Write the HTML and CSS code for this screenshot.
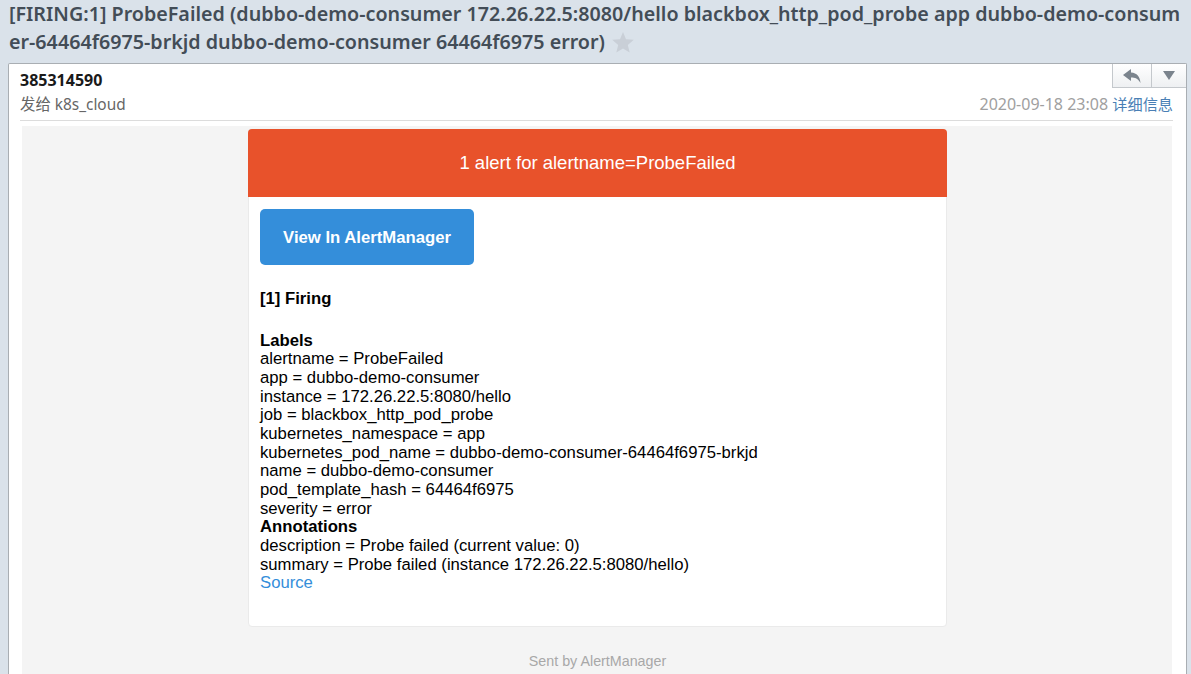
FILE: index.html

```html
<!DOCTYPE html>
<html lang="en">
<head>
    <meta charset="UTF-8">
    <meta name="viewport" content="width=device-width, initial-scale=1.0">
    <title>ProbeFailed</title>
    <link rel="stylesheet" href="styles.css">
</head>
<body>
    <h1 class="subject">[FIRING:1] ProbeFailed (dubbo-demo-consumer 172.26.22.5:8080/hello blackbox_http_pod_probe app dubbo-demo-consumer-64464f6975-brkjd dubbo-demo-consumer 64464f6975 error)
        <svg class="star" width="22" height="21" viewBox="0 0 22 21"><path d="M11 0l3 7.2 7.8.6-6 5.1 1.9 7.6L11 16.400l-6.700 4.100 1.900-7.600-6-5.100L8 7.200z"/></svg>
    </h1>

    <div class="mail">
        <div class="mail-head">
            <div class="head-row">
                <div class="sender">385314590</div>
                <div class="actions">
                    <button class="action action-reply">
                        <svg width="20" height="16" viewBox="0 0 20 16"><path d="M9 1L1 7l8 6V9.500c4 0 7 1 9.500 5.500C18 9 15 4.800 9 4.500z"/></svg>
                    </button>
                    <button class="action action-more">
                        <svg width="12" height="9" viewBox="0 0 12 9"><path d="M0 0h12L6 9z"/></svg>
                    </button>
                </div>
            </div>
            <div class="head-row meta">
                <div class="to">发给 k8s_cloud</div>
                <div class="when">2020-09-18 23:08 <a href="#">详细信息</a></div>
            </div>
        </div>

        <div class="mail-body">
            <div class="card">
                <div class="alert-title">1 alert for alertname=ProbeFailed</div>
                <div class="card-content">
                    <a class="btn" href="#">View In AlertManager</a>
                    <p class="firing"><strong>[1] Firing</strong></p>
                    <div class="details">
                        <strong>Labels</strong><br>
                        alertname = ProbeFailed<br>
                        app = dubbo-demo-consumer<br>
                        instance = 172.26.22.5:8080/hello<br>
                        job = blackbox_http_pod_probe<br>
                        kubernetes_namespace = app<br>
                        kubernetes_pod_name = dubbo-demo-consumer-64464f6975-brkjd<br>
                        name = dubbo-demo-consumer<br>
                        pod_template_hash = 64464f6975<br>
                        severity = error<br>
                        <strong>Annotations</strong><br>
                        description = Probe failed (current value: 0)<br>
                        summary = Probe failed (instance 172.26.22.5:8080/hello)<br>
                        <a href="#">Source</a>
                    </div>
                </div>
            </div>
            <div class="footer">Sent by AlertManager</div>
        </div>
    </div>
</body>
</html>
```

FILE: styles.css

```css
* {
    margin: 0;
    padding: 0;
    box-sizing: border-box;
}

html, body {
    height: 674px;
    overflow: hidden;
}

body {
    background: #dae2ea;
    font-family: "Noto Sans", "Noto Sans CJK SC", sans-serif;
}

.subject {
    height: 63px;
    padding: 0 6px 0 9px;
    font-size: 19.7px;
    font-weight: 600;
    line-height: 28px;
    color: #434d57;
    word-break: break-all;
}

.star {
    vertical-align: -4px;
    margin-left: 2px;
    fill: #c9cfd7;
}

.mail {
    margin: 0 4px 0 8px;
    height: 611px;
    background: #fff;
    border: 1px solid #a9aeb3;
    border-bottom: none;
    border-radius: 2px 2px 0 0;
    padding: 0 14px 0 11px;
}

.mail-head {
    height: 57px;
    margin-right: -1px;
    border-bottom: 1px solid #dcdcdc;
}

.head-row {
    display: flex;
    justify-content: space-between;
}

.sender {
    padding-top: 6px;
    font-size: 16px;
    font-weight: 700;
    line-height: 20px;
    color: #1a1a1a;
}

.actions {
    display: flex;
    height: 24px;
    margin-right: -13px;
}

.action {
    display: flex;
    align-items: center;
    justify-content: center;
    height: 24px;
    background: linear-gradient(#fff, #eef0f2);
    border: none;
    border-left: 1px solid #c4c8cc;
    border-bottom: 1px solid #c4c8cc;
}

.action-reply {
    width: 39px;
}

.action-reply svg {
    fill: #7b848d;
}

.action-more {
    width: 35px;
}

.action-more svg {
    fill: #7b848d;
}

.meta {
    height: 31px;
    padding-top: 4px;
    font-size: 15.4px;
    line-height: 22px;
    color: #666;
}

.when {
    margin-top: -1px;
    color: #a0a0a0;
    font-size: 16px;
}

.when a {
    color: #4a7fb5;
    font-size: 15.2px;
    text-decoration: none;
}

.mail-body {
    margin: 5px 0 0 2px;
    height: 560px;
    background: #f4f4f4;
    padding-top: 3px;
    font-family: "Liberation Sans", Arial, sans-serif;
}

.card {
    width: 699px;
    height: 498px;
    margin-left: 226px;
    background: #fff;
    border: 1px solid #eaeaea;
    border-radius: 4px;
}

.alert-title {
    height: 68px;
    margin: -1px -1px 0;
    padding-top: 24px;
    background: #e8522b;
    border-radius: 4px 4px 0 0;
    color: #fff;
    font-size: 18.5px;
    line-height: 19px;
    text-align: center;
}

.card-content {
    padding: 12px 11px;
    font-size: 16.7px;
    line-height: 18.67px;
    color: #000;
}

.btn {
    display: block;
    width: 214px;
    height: 56px;
    background: #348eda;
    border-radius: 5px;
    color: #fff;
    font-weight: 700;
    line-height: 58px;
    text-align: center;
    text-decoration: none;
}

.firing {
    margin: 25px 0 23px;
}

.details a {
    color: #348eda;
    text-decoration: none;
}

.footer {
    width: 699px;
    margin: 25px 0 0 226px;
    font-size: 14.3px;
    line-height: 18px;
    color: #a8a8a8;
    text-align: center;
}
```
